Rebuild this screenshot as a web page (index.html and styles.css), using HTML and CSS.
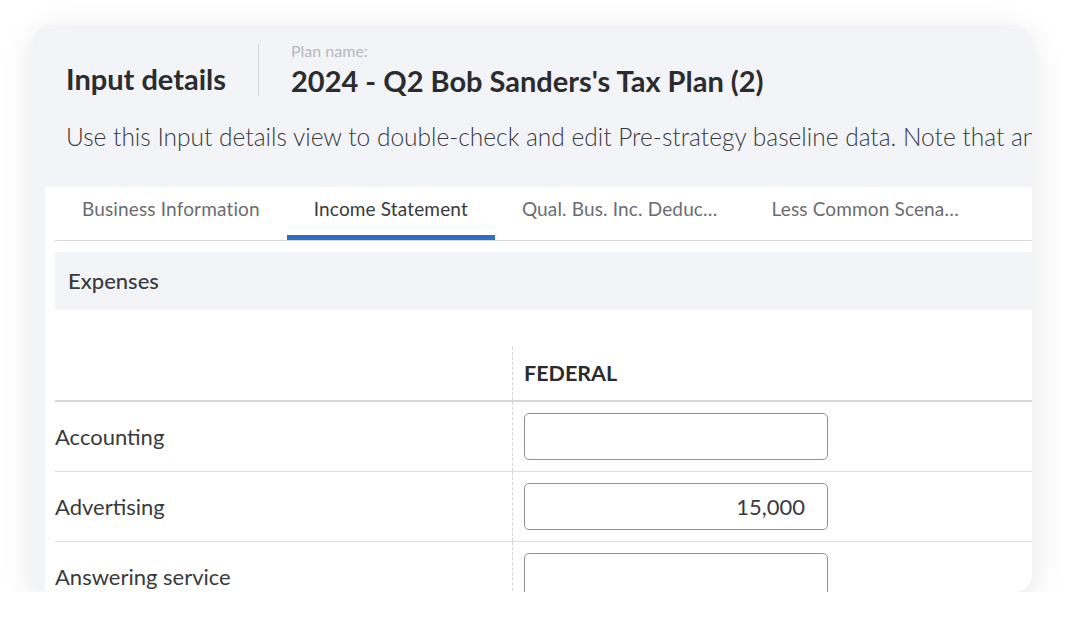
FILE: index.html
```html
<!DOCTYPE html>
<html lang="en">
<head>
  <meta charset="UTF-8" />
  <meta name="viewport" content="width=device-width, initial-scale=1.0"/>
  <title>Input details</title>
  <link rel="stylesheet" href="styles.css">
</head>
<body>
  <div class="card">
    <div class="head">
      <h1>Input details</h1>
      <div class="divider"></div>
      <div class="plan">
        <div class="plan-label">Plan name:</div>
        <div class="plan-name">2024 - Q2 Bob Sanders's Tax Plan (2)</div>
      </div>
    </div>
    <p class="desc">Use this Input details view to double-check and edit Pre-strategy baseline data. Note that any changes made here will update the plan.</p>

    <div class="panel">
      <div class="tabs">
        <div class="tab">Business Information</div>
        <div class="tab active">Income Statement</div>
        <div class="tab">Qual. Bus. Inc. Deduc…</div>
        <div class="tab">Less Common Scena…</div>
      </div>

      <div class="section">Expenses</div>

      <table class="grid">
        <thead>
          <tr>
            <th class="label-col"></th>
            <th class="val-col">FEDERAL</th>
          </tr>
        </thead>
        <tbody>
          <tr>
            <td class="label-col">Accounting</td>
            <td class="val-col"><div class="field"></div></td>
          </tr>
          <tr>
            <td class="label-col">Advertising</td>
            <td class="val-col"><div class="field">15,000</div></td>
          </tr>
          <tr>
            <td class="label-col">Answering service</td>
            <td class="val-col"><div class="field"></div></td>
          </tr>
        </tbody>
      </table>
    </div>
  </div>
</body>
</html>
```

FILE: styles.css
```css
:root {
  --ink: #393a3d;
  --dark: #2b2c2f;
  --muted: #6b6c72;
  --line: #dcdee1;
  --bg-soft: #f3f4f7;
  --blue: #2f70c1;
}

body {
  margin: 0;
  background: #ffffff;
  font-family: Lato, 'Noto Sans', sans-serif;
  color: var(--ink);
}

.card {
  margin: 25px 0 0 33px;
  width: 999px;
  height: 567px;
  border-radius: 18px;
  background: var(--bg-soft);
  overflow: hidden;
  box-shadow: 0 8px 34px rgba(0, 0, 0, 0.10);
}

.head {
  display: flex;
  align-items: flex-start;
  height: 52px;
  padding: 19px 0 0 33px;
}

.head h1 {
  margin: 18px 0 0;
  font-size: 29px;
  line-height: 34px;
  font-weight: 700;
  color: var(--dark);
  white-space: nowrap;
}

.divider {
  flex: none;
  width: 1px;
  height: 52px;
  background: #d4d7dc;
  margin: 0 32px;
}

.plan {
  margin-top: -2px;
}

.plan-label {
  font-size: 16px;
  line-height: 18px;
  color: #b6b9bf;
}

.plan-name {
  margin-top: 4px;
  font-size: 29px;
  line-height: 34px;
  font-weight: 700;
  color: var(--dark);
  white-space: nowrap;
}

.desc {
  margin: 26px 0 0 33px;
  font-size: 24.5px;
  line-height: 30px;
  font-weight: 300;
  white-space: nowrap;
}

.panel {
  margin: 35px 0 0 12px;
  width: 1100px;
  height: 420px;
  background: #ffffff;
  padding-left: 10px;
}

.tabs {
  display: flex;
  border-bottom: 1px solid #d4d7dc;
}

.tab {
  padding: 0 27px;
  height: 48px;
  line-height: 44px;
  font-size: 19px;
  letter-spacing: 0.15px;
  color: var(--muted);
  border-bottom: 5px solid transparent;
  white-space: nowrap;
}

.tab.active {
  color: var(--ink);
  border-bottom-color: var(--blue);
}

.section {
  margin-top: 11px;
  height: 58px;
  line-height: 58px;
  padding-left: 13px;
  background: var(--bg-soft);
  font-size: 22px;
  font-weight: 500;
}

.grid {
  margin-top: 37px;
  width: 100%;
  border-collapse: collapse;
}

.grid th {
  height: 53px;
  line-height: 53px;
  padding: 0;
  text-align: left;
  font-size: 21.5px;
  font-weight: 700;
  color: var(--dark);
  border-bottom: 2px solid #d4d7dc;
}

.grid td {
  height: 69px;
  border-bottom: 1px solid var(--line);
  font-size: 22px;
  padding: 0;
}

.label-col {
  width: 457px;
}

.grid .val-col {
  border-left: 1px dashed #cfd2d6;
  padding-left: 11px;
}

.field {
  width: 278px;
  height: 45px;
  line-height: 45px;
  border: 1px solid #8d9096;
  border-radius: 5px;
  padding: 0 22px 0 2px;
  text-align: right;
  font-size: 22px;
  color: var(--ink);
}
```
